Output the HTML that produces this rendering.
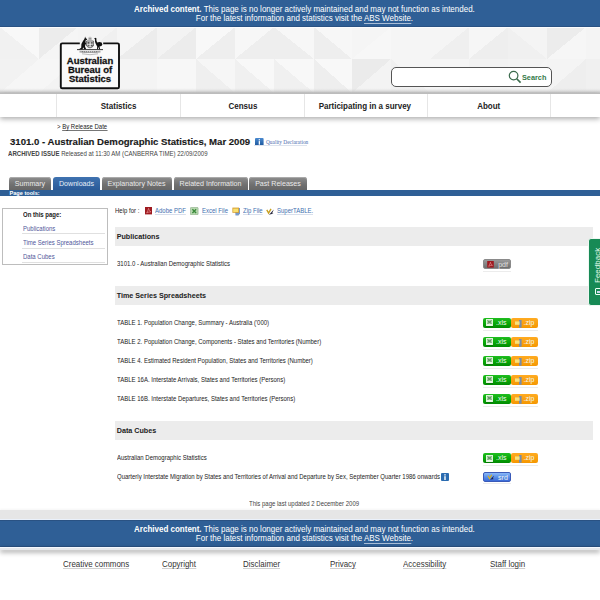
<!DOCTYPE html>
<html><head><meta charset="utf-8">
<style>
*{margin:0;padding:0;box-sizing:border-box}
html,body{width:600px;height:600px;overflow:hidden;background:#fff;font-family:"Liberation Sans",sans-serif;color:#333}
.abs{position:absolute}
.t{position:absolute;white-space:nowrap}
.banner{position:absolute;left:0;width:600px;background:#2f5f96;box-shadow:inset 0 -1px 0 #2a5283;color:#fff;text-align:center;font-size:8.8px;line-height:9px;padding-left:8px}
.banner u{text-decoration:none;border-bottom:1px solid #a9bdd6}
#hdr{position:absolute;left:0;top:27px;width:600px;height:66px;background:#f4f4f4;overflow:hidden}
#nav{position:absolute;left:0;top:93px;width:600px;height:24px;background:#fff;border-top:1px solid #bcbcbc;box-shadow:0 2px 5px rgba(0,0,0,.32)}
.sx{display:inline-block;transform:scaleX(.909);transform-origin:50% 0}
#nav div{position:absolute;top:0;height:23px;border-left:1px solid #e6e6e6;font-size:8.8px;font-weight:bold;color:#222;text-align:center;line-height:25.2px}
.tab{position:absolute;top:177px;height:13px;background:linear-gradient(#8e8e8e,#707070 60%,#666);border-radius:3px 3px 0 0;color:#eaeaea;font-size:7.1px;line-height:15px;text-align:center;box-shadow:inset 0 1px 0 #aaa}
.tab.on{background:linear-gradient(#3f72b0,#2a5a98);box-shadow:none;color:#e8eef8}
.sec{position:absolute;left:114.7px;width:478.3px;height:19px;background:#ececec;font-size:7.2px;font-weight:bold;color:#222;line-height:20.8px;padding-left:2px}
.row{position:absolute;left:117px;font-size:7px;color:#222;white-space:nowrap;line-height:8px;transform:scaleX(.857);transform-origin:0 0}
.lnk{color:#4270b0}
.side{position:absolute;left:22.7px;font-size:7px;color:#4f579a;line-height:8px;white-space:nowrap;transform:scaleX(.857);transform-origin:0 0}
.sl{position:absolute;left:22px;width:83px;height:1px;background:#e0e0e0}
.btn{position:absolute;height:9.8px;border-radius:2px;color:#f0f6f0;font-size:7px;line-height:10px}
.bl{position:absolute;top:0;line-height:10.4px}
.xls{background:linear-gradient(#20bd20,#08a808 55%,#028a02)}
.zip{background:linear-gradient(#ffab22,#f59700)}
.pdf{background:linear-gradient(#9a9a9a,#6e6e6e)}
.srd{background:linear-gradient(#8ab8f8,#5a90e8 50%,#3a6ad8)}
.uline{position:absolute;height:1px;background:#ececec}
.foot{position:absolute;top:560.3px;font-size:8.8px;transform:scaleX(.903);transform-origin:0 0;color:#333;white-space:nowrap;line-height:8px;border-bottom:1px solid #d0d0d0}
</style></head><body>
<div class="banner" style="top:0;height:27px;padding-top:4.5px"><span class="sx"><b>Archived content.</b> This page is no longer actively maintained and may not function as intended.</span><br><span class="sx">For the latest information and statistics visit the <u>ABS Website</u>.</span></div>

<div id="hdr">
<svg width="600" height="66" style="position:absolute;left:0;top:0">
<g stroke="none" shape-rendering="crispEdges"><rect x="0" y="0" width="39" height="32" fill="#f1f1f1"/><polygon points="0,0 39,0 39,32" fill="#f8f8f8"/><rect x="39" y="0" width="39" height="32" fill="#f5f5f5"/><polygon points="39,0 78,0 39,32" fill="#ececec"/><rect x="78" y="0" width="39" height="32" fill="#f0f0f0"/><polygon points="78,0 117,0 78,32" fill="#f4f4f4"/><rect x="117" y="0" width="40" height="32" fill="#ececec"/><polygon points="117,0 157,0 117,32" fill="#f5f5f5"/><rect x="157" y="0" width="39" height="32" fill="#ececec"/><polygon points="157,0 196,0 157,32" fill="#f3f3f3"/><rect x="196" y="0" width="39" height="32" fill="#eeeeee"/><polygon points="196,0 235,0 196,32" fill="#f8f8f8"/><rect x="235" y="0" width="39" height="32" fill="#eeeeee"/><polygon points="235,0 274,0 235,32" fill="#f7f7f7"/><rect x="274" y="0" width="40" height="32" fill="#eeeeee"/><polygon points="274,0 314,0 314,32" fill="#f7f7f7"/><rect x="314" y="0" width="38" height="32" fill="#eeeeee"/><polygon points="314,0 352,0 352,32" fill="#f7f7f7"/><rect x="352" y="0" width="39" height="32" fill="#f7f7f7"/><polygon points="352,0 391,0 352,32" fill="#f5f5f5"/><rect x="391" y="0" width="39" height="32" fill="#f5f5f5"/><rect x="430" y="0" width="39" height="32" fill="#efefef"/><polygon points="430,0 469,0 430,32" fill="#f5f5f5"/><rect x="469" y="0" width="39" height="32" fill="#eeeeee"/><polygon points="469,0 508,0 469,32" fill="#f6f6f6"/><rect x="508" y="0" width="39" height="32" fill="#f0f0f0"/><polygon points="508,0 547,0 547,32" fill="#f4f4f4"/><rect x="547" y="0" width="39" height="32" fill="#f6f6f6"/><polygon points="547,0 586,0 547,32" fill="#ececec"/><rect x="586" y="0" width="39" height="32" fill="#f4f4f4"/><rect x="0" y="32" width="39" height="34" fill="#f6f6f6"/><polygon points="0,32 39,32 0,66" fill="#f2f2f2"/><rect x="39" y="32" width="39" height="34" fill="#f3f3f3"/><polygon points="39,32 78,32 39,66" fill="#f6f6f6"/><rect x="78" y="32" width="39" height="34" fill="#f4f4f4"/><rect x="117" y="32" width="40" height="34" fill="#f4f4f4"/><rect x="157" y="32" width="39" height="34" fill="#f7f7f7"/><rect x="196" y="32" width="39" height="34" fill="#efefef"/><polygon points="196,32 235,32 235,66" fill="#f6f6f6"/><rect x="235" y="32" width="39" height="34" fill="#f0f0f0"/><polygon points="235,32 274,32 274,66" fill="#f8f8f8"/><rect x="274" y="32" width="40" height="34" fill="#f0f0f0"/><polygon points="274,32 314,32 314,66" fill="#f8f8f8"/><rect x="314" y="32" width="38" height="34" fill="#eeeeee"/><polygon points="314,32 352,32 352,66" fill="#f8f8f8"/><rect x="352" y="32" width="39" height="34" fill="#f3f3f3"/><polygon points="352,32 391,32 352,66" fill="#ebebeb"/><rect x="391" y="32" width="39" height="34" fill="#f0f0f0"/><polygon points="391,32 430,32 430,66" fill="#f5f5f5"/><rect x="430" y="32" width="39" height="34" fill="#f5f5f5"/><rect x="469" y="32" width="39" height="34" fill="#f2f2f2"/><rect x="508" y="32" width="39" height="34" fill="#f5f5f5"/><polygon points="508,32 547,32 508,66" fill="#f3f3f3"/><rect x="547" y="32" width="39" height="34" fill="#eeeeee"/><polygon points="547,32 586,32 547,66" fill="#f4f4f4"/><rect x="586" y="32" width="39" height="34" fill="#f0f0f0"/></g>
<rect x="0" y="61" width="600" height="5" fill="url(#sh)"/><rect x="0" y="0" width="600" height="1" fill="#fbfcfe"/>
<defs><linearGradient id="sh" x1="0" y1="0" x2="0" y2="1"><stop offset="0" stop-color="#e6e6e6" stop-opacity="0"/><stop offset="1" stop-color="#c4c4c4"/></linearGradient></defs>
</svg>
</div>

<!-- logo -->
<svg class="abs" style="left:58px;top:35px" width="64" height="56" viewBox="0 0 64 56">
<rect x="3" y="8.4" width="58" height="44.9" fill="#fafafa"/><path d="M21.8,8.4 H4.2 Q2.8,8.4 2.8,9.8 V51.9 Q2.8,53.3 4.2,53.3 H59.6 Q61,53.3 61,51.9 V9.8 Q61,8.4 59.6,8.4 H45.2" fill="none" stroke="#111" stroke-width="1.9"/>
<g transform="translate(14,-3)">
<!-- kangaroo local coords -->
<path d="M13.2,4.6 L13.6,6 L15.3,7.2 L14.6,8 L13.8,8 L13.4,10 L14.3,12 L13.4,12.6 L13,14.5 L14.2,17.2 L12.2,17.2 L11.2,15.2 L10.6,17.2 L6.6,17.5 L9.2,15.8 L9.4,12 L11,9 L12.4,7 Z" fill="#111"/>
<!-- emu -->
<path d="M23.4,5.8 L22,6.8 L23,7.2 L23,9.8 L23.6,11.6 L24.6,13.6 L25.2,14.6 L25,17.2 L26,17.2 L26.3,14.8 L27.2,17.2 L28.2,17.2 L27.5,14.6 L29.4,14 L30.4,12.4 L29.6,10.6 L27.4,10 L25.2,10.4 L24.4,8.4 L24.4,6.2 Z" fill="#111"/>
<!-- shield -->
<path d="M14.6,9 H21.4 V14 Q18,17.6 14.6,14 Z" fill="#fff"/>
<path d="M14.6,9 H21.4 V14 Q18,17.6 14.6,14 Z" fill="none" stroke="#333" stroke-width="0.7"/>
<rect x="15.4" y="9.8" width="2.2" height="2" fill="#555"/><rect x="18.6" y="9.8" width="2.2" height="2" fill="#666"/>
<rect x="15.4" y="12.6" width="2.2" height="2" fill="#666"/><rect x="18.6" y="12.6" width="2.2" height="2" fill="#555"/>
<path d="M18,4.2 L18.7,6 L20,5.4 L19,7.4 L17,7.4 L16,5.4 L17.3,6 Z" fill="#999"/>
<path d="M16,8 Q18,7 20,8" stroke="#aaa" stroke-width="0.8" fill="none"/>
<rect x="5" y="17.2" width="26" height="0.9" fill="#222"/>
<path d="M7.5,19.6 Q18,21 28.5,19.6" stroke="#aaa" stroke-width="1.6" fill="none"/>
<path d="M10,19.7 H26" stroke="#333" stroke-width="0.6" stroke-dasharray="0.8,1.2" fill="none"/>
<path d="M10,21.8 Q18,23.6 26,21.8" stroke="#bbb" stroke-width="1" fill="none"/>
</g>
<g transform="translate(32,0) scale(1.13,1)">
<text x="0" y="29.2" text-anchor="middle" font-family="Liberation Sans" font-weight="bold" font-size="8.4" fill="#111" stroke="#111" stroke-width="0.25">Australian</text>
<text x="0" y="38" text-anchor="middle" font-family="Liberation Sans" font-weight="bold" font-size="8.4" fill="#111" stroke="#111" stroke-width="0.25">Bureau of</text>
<text x="0" y="46.8" text-anchor="middle" font-family="Liberation Sans" font-weight="bold" font-size="8.4" fill="#111" stroke="#111" stroke-width="0.25">Statistics</text>
</g>
</svg>

<!-- search -->
<div class="abs" style="left:391px;top:67px;width:161px;height:20px;border:1px solid #555;border-radius:5px;background:#fff"></div>
<svg class="abs" style="left:508px;top:70px" width="14" height="14" viewBox="0 0 14 14"><circle cx="5.6" cy="5.6" r="4.3" fill="none" stroke="#3a6a4c" stroke-width="1.2"/><path d="M8.7,8.7 L12.6,12.6" stroke="#3a6a4c" stroke-width="1.6"/></svg>
<div class="t" style="left:521.5px;top:72.6px;font-size:8px;font-weight:bold;color:#347a48;line-height:9px;transform:scaleX(.913);transform-origin:0 0">Search</div>

<div id="nav">
<div style="left:56px;width:124.5px"><span class="sx">Statistics</span></div>
<div style="left:180px;width:124px"><span class="sx">Census</span></div>
<div style="left:304px;width:123px;padding-right:2px"><span class="sx">Participating in a survey</span></div>
<div style="left:427px;width:123px;padding-right:1.5px"><span class="sx">About</span></div>
<div style="left:550px;width:50px"></div>
</div>

<div class="t" style="left:57px;top:123px;font-size:7px;color:#222;line-height:8px;transform:scaleX(.857);transform-origin:0 0">&gt; <span style="border-bottom:1px solid #777">By Release Date</span></div>
<div class="t" style="left:10px;top:136px;font-size:9.6px;font-weight:bold;color:#1a1a1a;line-height:11px;-webkit-text-stroke:0.15px #1a1a1a">3101.0 - Australian Demographic Statistics, Mar 2009</div>
<svg class="abs" style="left:255px;top:138.3px" width="9" height="8" viewBox="0 0 9 8"><defs><linearGradient id="ig" x1="0" y1="0" x2="0" y2="1"><stop offset="0" stop-color="#4a8ad0"/><stop offset="1" stop-color="#1a559a"/></linearGradient></defs><rect x="0" y="0" width="8.6" height="7.8" rx="1" fill="url(#ig)"/><rect x="3.7" y="1.2" width="1.3" height="1.2" fill="#fff"/><rect x="3.7" y="3.1" width="1.3" height="3.6" fill="#fff"/></svg>
<div class="t" style="left:266px;top:138.5px;font-family:'Liberation Serif',serif;font-size:5.35px;color:#4a6aae;line-height:7px">Quality Declaration</div><div class="abs" style="left:254px;top:145px;width:53px;height:1px;background:#dde3ee"></div>
<div class="t" style="left:8px;top:149.8px;font-size:7px;color:#444;line-height:8px;transform:scaleX(.866);transform-origin:0 0"><b>ARCHIVED ISSUE</b> Released at 11:30 AM (CANBERRA TIME) 22/09/2009</div>

<div class="tab" style="left:9px;width:42px">Summary</div>
<div class="tab on" style="left:53px;width:47px">Downloads</div>
<div class="tab" style="left:101.5px;width:70px">Explanatory Notes</div>
<div class="tab" style="left:173.5px;width:74px">Related Information</div>
<div class="tab" style="left:249px;width:58px">Past Releases</div>
<div class="abs" style="left:0;top:189.7px;width:600px;height:6px;background:#2f5f96;color:#fff;font-size:5.6px;font-weight:bold;line-height:7.2px;padding-left:9.5px">Page tools:</div>

<!-- sidebar -->
<div class="abs" style="left:2px;top:208px;width:106px;height:57px;border:1px solid #bdbdbd"></div>
<div class="t" style="left:22.7px;top:211px;font-size:7px;font-weight:bold;color:#222;line-height:8px;transform:scaleX(.857);transform-origin:0 0">On this page:</div>
<div class="side" style="top:224.5px">Publications</div>
<div class="sl" style="top:233px"></div>
<div class="side" style="top:238.5px">Time Series Spreadsheets</div>
<div class="sl" style="top:248px"></div>
<div class="side" style="top:253px">Data Cubes</div>
<div class="sl" style="top:262px"></div>

<!-- help for -->
<div class="row" style="left:115px;top:206.8px;line-height:7.6px">Help for :</div>
<svg class="abs" style="left:144.7px;top:207.3px" width="7.4" height="7.4" viewBox="0 0 7 7"><rect width="7" height="7" fill="#9e1a20"/><path d="M1.6,5.6 C2.5,4 3.2,2.5 3.4,1.3 C3.7,2.8 4.6,4.2 5.6,4.6 C4.4,4.5 2.8,4.9 1.6,5.6Z" fill="none" stroke="#f0a0a0" stroke-width="0.6"/></svg>
<div class="row lnk" style="left:155.3px;top:206.8px;line-height:7.6px;border-bottom:1px solid #d8dfec">Adobe PDF</div>
<svg class="abs" style="left:190.3px;top:207.2px" width="8.5" height="8.3" viewBox="0 0 8 8"><rect x="0.3" y="0.3" width="7.4" height="7.4" rx="1" fill="#b8d8b0" stroke="#8aaa88" stroke-width="0.6"/><path d="M2.2,2.2 L5.8,5.8 M5.8,2.2 L2.2,5.8" stroke="#3a8a3a" stroke-width="1.3"/></svg>
<div class="row lnk" style="left:201.9px;top:206.8px;line-height:7.6px;border-bottom:1px solid #d8dfec">Excel File</div>
<svg class="abs" style="left:231.5px;top:207.3px" width="9" height="9" viewBox="0 0 9 9"><path d="M3,1 H8 V6.5 L6.5,8.5 H3.5 Z" fill="#7a9ac8"/><rect x="0.4" y="0.6" width="6.6" height="5.2" fill="#d8a030"/><rect x="1.2" y="1.6" width="5" height="3.4" fill="#f8e070"/></svg>
<div class="row lnk" style="left:243px;top:206.8px;line-height:7.6px;border-bottom:1px solid #d8dfec">Zip File</div>
<svg class="abs" style="left:266px;top:207.5px" width="9" height="8" viewBox="0 0 9 8"><path d="M0.8,1.8 L2.6,5 L5,0.8" stroke="#c8a020" stroke-width="1.4" fill="none"/><path d="M2.8,7 L7.8,1.6 L6.2,5.2 L7.6,5.6 L4,6.4 Z" fill="#2a2a40"/></svg>
<div class="row lnk" style="left:276.7px;top:206.8px;line-height:7.6px;border-bottom:1px solid #d8dfec">SuperTABLE.</div>

<!-- publications -->
<div class="sec" style="top:227px">Publications</div>
<div class="row" style="top:259.7px">3101.0 - Australian Demographic Statistics</div>
<div class="btn pdf" style="left:483px;top:259px;width:28px;border:0.5px solid #8a8a8a"><svg style="position:absolute;left:2.9px;top:1.1px" width="7" height="6.6" viewBox="0 0 7 7"><rect width="7" height="7" fill="#9e1a20"/><path d="M1.6,5.6 C2.5,4 3.2,2.5 3.4,1.3 C3.7,2.8 4.6,4.2 5.6,4.6 C4.4,4.5 2.8,4.9 1.6,5.6Z" fill="none" stroke="#f0a0a0" stroke-width="0.6"/></svg><span class="bl" style="left:14.2px;color:#e0e0e0">pdf</span></div>
<div class="uline" style="left:483px;top:271px;width:28px"></div>

<!-- time series -->
<div class="sec" style="top:286px">Time Series Spreadsheets</div>
<div class="row" style="top:318.6px">TABLE 1. Population Change, Summary - Australia ('000)</div>
<div class="row" style="top:337.6px">TABLE 2. Population Change, Components - States and Territories (Number)</div>
<div class="row" style="top:356.6px">TABLE 4. Estimated Resident Population, States and Territories (Number)</div>
<div class="row" style="top:375.6px">TABLE 16A. Interstate Arrivals, States and Territories (Persons)</div>
<div class="row" style="top:394.6px">TABLE 16B. Interstate Departures, States and Territories (Persons)</div>


<div class="btn xls" style="left:483px;top:318px;width:27.5px"><svg style="position:absolute;left:3px;top:1.2px" width="7.2" height="8" viewBox="0 0 7.2 8"><rect x="0" y="7" width="7.2" height="1" fill="#0a6a0a" opacity=".6"/><rect width="7" height="7" fill="#ddf6d8"/><rect x="1" y="1" width="5" height="4.2" fill="#a8d4a4"/><path d="M1.6,1.6 L5.4,4.6 M5.4,1.6 L1.6,4.6" stroke="#55855a" stroke-width="1"/><rect x="1" y="5.4" width="5" height="0.9" fill="#f6fff6"/></svg><span class="bl" style="left:13px">.xls</span></div>
<div class="btn zip" style="left:510.9px;top:318px;width:27px"><svg style="position:absolute;left:3.8px;top:1.6px" width="7" height="8" viewBox="0 0 7 8"><rect x="4" y="0" width="2.6" height="7.7" fill="#7a8ca8"/><rect x="0" y="1.4" width="4.6" height="3.4" fill="#f8e27a"/></svg><span class="bl" style="left:12.6px">.zip</span></div>
<div class="uline" style="left:483px;top:330px;width:55px"></div>
<div class="btn xls" style="left:483px;top:337px;width:27.5px"><svg style="position:absolute;left:3px;top:1.2px" width="7.2" height="8" viewBox="0 0 7.2 8"><rect x="0" y="7" width="7.2" height="1" fill="#0a6a0a" opacity=".6"/><rect width="7" height="7" fill="#ddf6d8"/><rect x="1" y="1" width="5" height="4.2" fill="#a8d4a4"/><path d="M1.6,1.6 L5.4,4.6 M5.4,1.6 L1.6,4.6" stroke="#55855a" stroke-width="1"/><rect x="1" y="5.4" width="5" height="0.9" fill="#f6fff6"/></svg><span class="bl" style="left:13px">.xls</span></div>
<div class="btn zip" style="left:510.9px;top:337px;width:27px"><svg style="position:absolute;left:3.8px;top:1.6px" width="7" height="8" viewBox="0 0 7 8"><rect x="4" y="0" width="2.6" height="7.7" fill="#7a8ca8"/><rect x="0" y="1.4" width="4.6" height="3.4" fill="#f8e27a"/></svg><span class="bl" style="left:12.6px">.zip</span></div>
<div class="uline" style="left:483px;top:349px;width:55px"></div>
<div class="btn xls" style="left:483px;top:356px;width:27.5px"><svg style="position:absolute;left:3px;top:1.2px" width="7.2" height="8" viewBox="0 0 7.2 8"><rect x="0" y="7" width="7.2" height="1" fill="#0a6a0a" opacity=".6"/><rect width="7" height="7" fill="#ddf6d8"/><rect x="1" y="1" width="5" height="4.2" fill="#a8d4a4"/><path d="M1.6,1.6 L5.4,4.6 M5.4,1.6 L1.6,4.6" stroke="#55855a" stroke-width="1"/><rect x="1" y="5.4" width="5" height="0.9" fill="#f6fff6"/></svg><span class="bl" style="left:13px">.xls</span></div>
<div class="btn zip" style="left:510.9px;top:356px;width:27px"><svg style="position:absolute;left:3.8px;top:1.6px" width="7" height="8" viewBox="0 0 7 8"><rect x="4" y="0" width="2.6" height="7.7" fill="#7a8ca8"/><rect x="0" y="1.4" width="4.6" height="3.4" fill="#f8e27a"/></svg><span class="bl" style="left:12.6px">.zip</span></div>
<div class="uline" style="left:483px;top:368px;width:55px"></div>
<div class="btn xls" style="left:483px;top:375px;width:27.5px"><svg style="position:absolute;left:3px;top:1.2px" width="7.2" height="8" viewBox="0 0 7.2 8"><rect x="0" y="7" width="7.2" height="1" fill="#0a6a0a" opacity=".6"/><rect width="7" height="7" fill="#ddf6d8"/><rect x="1" y="1" width="5" height="4.2" fill="#a8d4a4"/><path d="M1.6,1.6 L5.4,4.6 M5.4,1.6 L1.6,4.6" stroke="#55855a" stroke-width="1"/><rect x="1" y="5.4" width="5" height="0.9" fill="#f6fff6"/></svg><span class="bl" style="left:13px">.xls</span></div>
<div class="btn zip" style="left:510.9px;top:375px;width:27px"><svg style="position:absolute;left:3.8px;top:1.6px" width="7" height="8" viewBox="0 0 7 8"><rect x="4" y="0" width="2.6" height="7.7" fill="#7a8ca8"/><rect x="0" y="1.4" width="4.6" height="3.4" fill="#f8e27a"/></svg><span class="bl" style="left:12.6px">.zip</span></div>
<div class="uline" style="left:483px;top:387px;width:55px"></div>
<div class="btn xls" style="left:483px;top:394px;width:27.5px"><svg style="position:absolute;left:3px;top:1.2px" width="7.2" height="8" viewBox="0 0 7.2 8"><rect x="0" y="7" width="7.2" height="1" fill="#0a6a0a" opacity=".6"/><rect width="7" height="7" fill="#ddf6d8"/><rect x="1" y="1" width="5" height="4.2" fill="#a8d4a4"/><path d="M1.6,1.6 L5.4,4.6 M5.4,1.6 L1.6,4.6" stroke="#55855a" stroke-width="1"/><rect x="1" y="5.4" width="5" height="0.9" fill="#f6fff6"/></svg><span class="bl" style="left:13px">.xls</span></div>
<div class="btn zip" style="left:510.9px;top:394px;width:27px"><svg style="position:absolute;left:3.8px;top:1.6px" width="7" height="8" viewBox="0 0 7 8"><rect x="4" y="0" width="2.6" height="7.7" fill="#7a8ca8"/><rect x="0" y="1.4" width="4.6" height="3.4" fill="#f8e27a"/></svg><span class="bl" style="left:12.6px">.zip</span></div>
<div class="uline" style="left:483px;top:406px;width:55px"></div>
<div class="btn xls" style="left:483px;top:453.4px;width:27.5px"><svg style="position:absolute;left:3px;top:1.2px" width="7.2" height="8" viewBox="0 0 7.2 8"><rect x="0" y="7" width="7.2" height="1" fill="#0a6a0a" opacity=".6"/><rect width="7" height="7" fill="#ddf6d8"/><rect x="1" y="1" width="5" height="4.2" fill="#a8d4a4"/><path d="M1.6,1.6 L5.4,4.6 M5.4,1.6 L1.6,4.6" stroke="#55855a" stroke-width="1"/><rect x="1" y="5.4" width="5" height="0.9" fill="#f6fff6"/></svg><span class="bl" style="left:13px">.xls</span></div>
<div class="btn zip" style="left:510.9px;top:453.4px;width:27px"><svg style="position:absolute;left:3.8px;top:1.6px" width="7" height="8" viewBox="0 0 7 8"><rect x="4" y="0" width="2.6" height="7.7" fill="#7a8ca8"/><rect x="0" y="1.4" width="4.6" height="3.4" fill="#f8e27a"/></svg><span class="bl" style="left:12.6px">.zip</span></div>
<div class="uline" style="left:483px;top:465.4px;width:55px"></div>
<!-- data cubes -->
<div class="sec" style="top:420.5px">Data Cubes</div>
<div class="row" style="top:453.6px">Australian Demographic Statistics</div>
<div class="row" style="top:473px">Quarterly Interstate Migration by States and Territories of Arrival and Departure by Sex, September Quarter 1986 onwards</div>
<svg class="abs" style="left:441.4px;top:473px" width="8" height="8" viewBox="0 0 8 8"><rect width="8" height="8" rx="1" fill="#2a6bb0"/><rect x="3.3" y="1.2" width="1.4" height="1.3" fill="#fff"/><rect x="3.3" y="3.2" width="1.4" height="3.8" fill="#fff"/></svg>
<div class="btn srd" style="left:483px;top:472px;width:27.7px;height:10.3px;border:0.6px solid #3a5ab8"><svg style="position:absolute;left:2.6px;top:1.4px" width="8.5" height="7" viewBox="0 0 9 8"><path d="M0.8,2 L2.6,5.2 L5,0.8" stroke="#d8b020" stroke-width="1.4" fill="none"/><path d="M2.8,7 L7.8,1.6 L6.2,5.2 L7.6,5.6 L4,6.4 Z" fill="#1a1a40"/></svg><span class="bl" style="left:14.1px">srd</span></div>
<div class="uline" style="left:483px;top:483px;width:28px"></div>

<div class="t" style="left:249px;top:500px;font-size:7px;color:#444;line-height:8px;transform:scaleX(.857);transform-origin:0 0">This page last updated 2 December 2009</div>

<div class="abs" style="left:0;top:509.5px;width:600px;height:10.5px;background:#e6e6e6;border-bottom:1px solid #eaf1fb;box-shadow:0 -1px 2px rgba(0,0,0,.04)"></div>
<div class="banner" style="top:520px;height:27px;padding-top:4.5px;box-shadow:inset 0 1px 0 #2a5283,inset 0 -1px 0 #2a5283"><span class="sx"><b>Archived content.</b> This page is no longer actively maintained and may not function as intended.</span><br><span class="sx">For the latest information and statistics visit the <u>ABS Website</u>.</span></div>
<div class="abs" style="left:0;top:547px;width:600px;height:3.2px;background:#e6e8ec;border-top:0.8px solid #f4f8ff;box-shadow:0 2px 5px rgba(0,0,0,.45)"></div>

<div class="foot" style="left:63.3px">Creative commons</div>
<div class="foot" style="left:161.7px">Copyright</div>
<div class="foot" style="left:242.5px">Disclaimer</div>
<div class="foot" style="left:330px">Privacy</div>
<div class="foot" style="left:403.3px">Accessibility</div>
<div class="foot" style="left:489.6px">Staff login</div>

<!-- feedback -->
<div class="abs" style="left:588px;top:237.5px;width:14px;height:68px;background:#178a55;border:1px solid #eef8f2;border-radius:3px 0 0 3px"></div>
<div class="t" style="left:593.2px;top:282.8px;transform-origin:0 0;transform:rotate(-90deg);font-size:8px;color:#e4fbee;line-height:9px">Feedback</div>
<div class="abs" style="left:594.8px;top:288px;width:6px;height:7.2px;background:#178a55;border:1.2px solid #f0fff6;border-radius:1px"></div><div class="abs" style="left:597px;top:290.5px;width:3px;height:0.8px;background:#cde"></div><div class="abs" style="left:597px;top:292.2px;width:3px;height:0.8px;background:#cde"></div>
</body></html>
